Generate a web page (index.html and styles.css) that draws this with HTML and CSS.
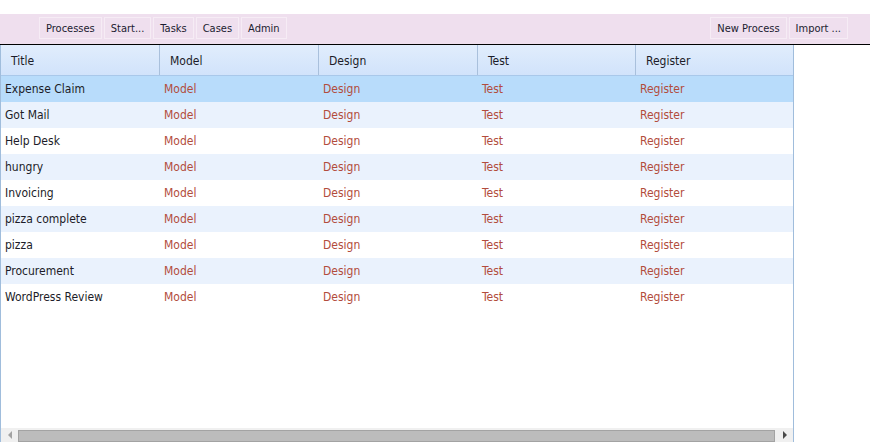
FILE: index.html
```html
<!DOCTYPE html>
<html>
<head>
<meta charset="utf-8">
<link rel="stylesheet" href="styles.css">
</head>
<body>
<div class="page">
  <div class="toolbar">
    <div class="group">
      <span class="btn">Processes</span>
      <span class="btn">Start...</span>
      <span class="btn">Tasks</span>
      <span class="btn">Cases</span>
      <span class="btn">Admin</span>
    </div>
    <div class="group">
      <span class="btn">New Process</span>
      <span class="btn">Import ...</span>
    </div>
  </div>
  <div class="grid">
    <div class="head row">
      <div class="hc">Title</div>
      <div class="hc">Model</div>
      <div class="hc">Design</div>
      <div class="hc">Test</div>
      <div class="hc">Register</div>
    </div>
    <div class="body">
      <div class="row sel"><div class="c">Expense Claim</div><div class="c l">Model</div><div class="c l">Design</div><div class="c l">Test</div><div class="c l">Register</div></div>
      <div class="row alt"><div class="c">Got Mail</div><div class="c l">Model</div><div class="c l">Design</div><div class="c l">Test</div><div class="c l">Register</div></div>
      <div class="row"><div class="c">Help Desk</div><div class="c l">Model</div><div class="c l">Design</div><div class="c l">Test</div><div class="c l">Register</div></div>
      <div class="row alt"><div class="c">hungry</div><div class="c l">Model</div><div class="c l">Design</div><div class="c l">Test</div><div class="c l">Register</div></div>
      <div class="row"><div class="c">Invoicing</div><div class="c l">Model</div><div class="c l">Design</div><div class="c l">Test</div><div class="c l">Register</div></div>
      <div class="row alt"><div class="c">pizza complete</div><div class="c l">Model</div><div class="c l">Design</div><div class="c l">Test</div><div class="c l">Register</div></div>
      <div class="row"><div class="c">pizza</div><div class="c l">Model</div><div class="c l">Design</div><div class="c l">Test</div><div class="c l">Register</div></div>
      <div class="row alt"><div class="c">Procurement</div><div class="c l">Model</div><div class="c l">Design</div><div class="c l">Test</div><div class="c l">Register</div></div>
      <div class="row"><div class="c">WordPress Review</div><div class="c l">Model</div><div class="c l">Design</div><div class="c l">Test</div><div class="c l">Register</div></div>
    </div>
    <div class="hscroll">
      <span class="arrow left"></span>
      <span class="thumb"></span>
      <span class="arrow right"></span>
    </div>
  </div>
</div>
</body>
</html>
```

FILE: styles.css
```css
html, body {
  margin: 0;
  padding: 0;
  background: #ffffff;
  overflow: hidden;
}
.page {
  padding-top: 14px;
  font-family: "DejaVu Sans Condensed", "DejaVu Sans", sans-serif;
  color: #1c1c28;
}
.toolbar {
  background: #efdfee;
  border-bottom: 1px solid #000;
  display: flex;
  justify-content: space-between;
  align-items: flex-start;
  padding: 3px 22px 0 39px;
  box-sizing: border-box;
  height: 31px;
}
.group {
  display: flex;
  gap: 2px;
}
.btn {
  font-size: 11px;
  height: 22px;
  line-height: 21px;
  box-sizing: border-box;
  border: 1px solid #f6ecf5;
  padding: 0 6px;
  color: #1c1c30;
  white-space: nowrap;
}
.grid {
  width: 794px;
  height: 397px;
  box-sizing: border-box;
  border-left: 1px solid #a0bddc;
  border-right: 1px solid #a0bddc;
  display: flex;
  flex-direction: column;
}
.row {
  display: grid;
  grid-template-columns: 159px 159px 159px 158px 157px;
  height: 26px;
  align-items: center;
}
.head {
  height: 31px;
  background: linear-gradient(#e1edfc, #d1e3fb);
  border-bottom: 1px solid #a9c8ea;
  box-sizing: border-box;
  align-items: stretch;
}
.hc {
  font-size: 12px;
  padding-left: 10px;
  border-right: 1px solid #a9c0dc;
  display: flex;
  align-items: center;
  padding-top: 2px;
}
.hc:last-child {
  border-right: none;
}
.body {
  flex: 1;
}
.c {
  font-size: 12px;
  padding-left: 4px;
  white-space: nowrap;
  overflow: hidden;
}
.l {
  color: #b24c3c;
}
.sel {
  background: #b8dcfb;
}
.alt {
  background: #eaf2fd;
}
.hscroll {
  height: 14px;
  background: #f0f0f0;
  display: flex;
  align-items: center;
}
.arrow {
  width: 0;
  height: 0;
  border-top: 4px solid transparent;
  border-bottom: 4px solid transparent;
}
.arrow.left {
  border-right: 4px solid #a3a3a3;
  margin: 0 6px 0 7px;
}
.arrow.right {
  border-left: 4px solid #4a4a4a;
  margin: 0 0 0 8px;
}
.thumb {
  width: 757px;
  height: 12px;
  box-sizing: border-box;
  background: #bcbcbc;
  border: 1px solid #a3a3a3;
  margin-top: 2px;
}
```
